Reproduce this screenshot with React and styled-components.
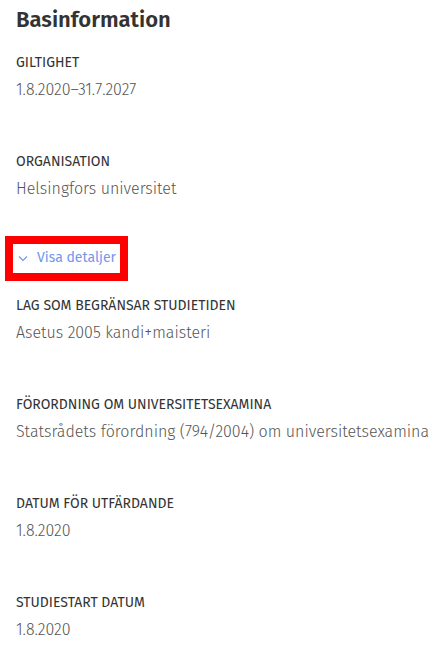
import React, { useState } from "react";
import styled, { createGlobalStyle } from "styled-components";

const GlobalStyle = createGlobalStyle`
  body {
    margin: 0;
    background: #ffffff;
    font-family: "Fira Sans", "Open Sans", "Noto Sans", sans-serif;
  }
`;

const Page = styled.div`
  padding: 5px 16px 0 16px;
`;

const Heading = styled.h2`
  margin: 0 0 18px 0;
  font-size: 22px;
  line-height: 30px;
  font-weight: 600;
  color: #333333;
`;

const FieldList = styled.div`
  display: flex;
  flex-direction: column;
  gap: 50px;
`;

const Field = styled.div`
  display: flex;
  flex-direction: column;
  gap: 5px;
`;

const Label = styled.div`
  font-size: 14px;
  line-height: 20px;
  color: #333333;
  text-transform: uppercase;
`;

const Value = styled.div`
  font-size: 16px;
  line-height: 24px;
  color: #555555;
  font-weight: 300;
`;

const DetailsFrame = styled.div`
  display: inline-block;
  margin: 35px 0 15px -11px;
  border: 8px solid #ff0000;
`;

const DetailsButton = styled.button`
  display: flex;
  align-items: center;
  gap: 9px;
  border: 0;
  background: none;
  padding: 4px 4px 5px 5px;
  font-family: inherit;
  font-size: 14px;
  line-height: 20px;
  color: #6f98ee;
  cursor: pointer;
`;

const Chevron = ({ open }) => (
  <svg width="10" height="7" viewBox="0 0 10 7" fill="none">
    <path
      d={open ? "M1 5.5L5 1.5 9 5.5" : "M1 1.5L5 5.5 9 1.5"}
      stroke="#6f98ee"
      strokeWidth="1.2"
    />
  </svg>
);

const basics = [
  { label: "Giltighet", value: "1.8.2020–31.7.2027" },
  { label: "Organisation", value: "Helsingfors universitet" },
];

const details = [
  { label: "Lag som begränsar studietiden", value: "Asetus 2005 kandi+maisteri" },
  {
    label: "Förordning om universitetsexamina",
    value: "Statsrådets förordning (794/2004) om universitetsexamina",
  },
  { label: "Datum för utfärdande", value: "1.8.2020" },
  { label: "Studiestart datum", value: "1.8.2020" },
];

const Fields = ({ items }) => (
  <FieldList>
    {items.map((f) => (
      <Field key={f.label}>
        <Label>{f.label}</Label>
        <Value>{f.value}</Value>
      </Field>
    ))}
  </FieldList>
);

export default function App() {
  const [open, setOpen] = useState(false);
  return (
    <Page>
      <GlobalStyle />
      <Heading>Basinformation</Heading>
      <Fields items={basics} />
      <DetailsFrame>
        <DetailsButton onClick={() => setOpen(!open)}>
          <Chevron open={open} />
          Visa detaljer
        </DetailsButton>
      </DetailsFrame>
      <Fields items={details} />
    </Page>
  );
}
